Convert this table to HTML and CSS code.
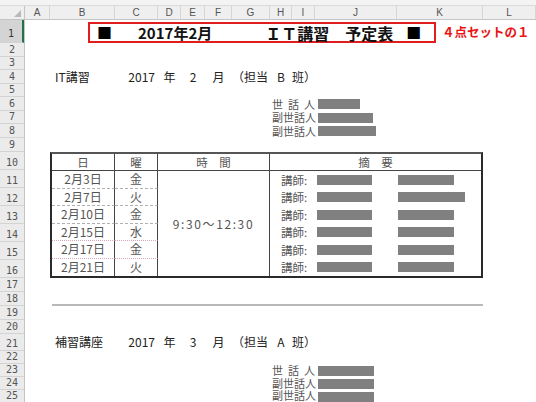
FILE: index.html
```html
<!DOCTYPE html>
<html lang="ja">
<head>
<meta charset="utf-8">
<title>IT講習 予定表</title>
<link rel="stylesheet" href="styles.css">
</head>
<body>
<div class="app">
  <div class="topstrip"></div>
  <div class="colhdr">
    <div class="corner"><span class="tri"></span></div>
    <div>A</div><div>B</div><div>C</div><div>D</div><div>E</div><div>F</div>
    <div>G</div><div>H</div><div>I</div><div>J</div><div>K</div><div>L</div>
  </div>
  <div class="main">
    <div class="rowhdr">
      <div class="sel">1</div><div>2</div><div>3</div><div>4</div><div>5</div>
      <div>6</div><div>7</div><div>8</div><div>9</div><div>10</div>
      <div>11</div><div>12</div><div>13</div><div>14</div><div>15</div>
      <div>16</div><div>17</div><div>18</div><div>19</div><div>20</div>
      <div>21</div><div>22</div><div>23</div><div>24</div><div>25</div>
    </div>
    <div class="sheet">
      <div class="title">
        <div class="redbox">
          <span class="sq">■</span>
          <span class="ym">2017年2月</span>
          <span class="ttl">ＩＴ講習　予定表</span>
          <span class="sq sq2">■</span>
        </div>
        <span class="note">４点セットの１</span>
      </div>

      <div class="cell l r4 cb pl5">IT講習</div>
      <div class="cell r r4 cc">2017</div>
      <div class="cell c r4 cd">年</div>
      <div class="cell c r4 ce">2</div>
      <div class="cell c r4 cf">月</div>
      <div class="cell l r4 cg">（担当</div>
      <div class="cell c r4 ch">B</div>
      <div class="cell l r4 ci">班）</div>

      <div class="cell l r6 lab"><span class="dist"><span>世</span><span>話</span><span>人</span></span></div>
      <div class="cell l r6 cj"><span class="red" style="width:42px"></span></div>
      <div class="cell l r7 lab"><span class="dist">副世話人</span></div>
      <div class="cell l r7 cj"><span class="red" style="width:55px"></span></div>
      <div class="cell l r8 lab"><span class="dist">副世話人</span></div>
      <div class="cell l r8 cj"><span class="red" style="width:58px"></span></div>

      <div class="tbl">
        <div class="th">日</div>
        <div class="th">曜</div>
        <div class="th">時　間</div>
        <div class="th last">摘　要</div>

        <div class="td">2月3日</div><div class="td">金</div>
        <div class="time">9:30～12:30</div>
        <div class="memo"><span>講師:</span><span class="red b1"></span><span class="red" style="width:56px"></span></div>

        <div class="td">2月7日</div><div class="td">火</div>
        <div class="memo"><span>講師:</span><span class="red b1"></span><span class="red" style="width:67px"></span></div>

        <div class="td">2月10日</div><div class="td">金</div>
        <div class="memo"><span>講師:</span><span class="red b1"></span><span class="red" style="width:56px"></span></div>

        <div class="td pink">2月15日</div><div class="td pink">水</div>
        <div class="memo"><span>講師:</span><span class="red b1"></span><span class="red" style="width:56px"></span></div>

        <div class="td pink">2月17日</div><div class="td pink">金</div>
        <div class="memo"><span>講師:</span><span class="red b1"></span><span class="red" style="width:56px"></span></div>

        <div class="td end">2月21日</div><div class="td end">火</div>
        <div class="memo"><span>講師:</span><span class="red b1"></span><span class="red" style="width:56px"></span></div>
      </div>

      <div class="sep"></div>

      <div class="cell l r21 cb pl5">補習講座</div>
      <div class="cell r r21 cc">2017</div>
      <div class="cell c r21 cd">年</div>
      <div class="cell c r21 ce">3</div>
      <div class="cell c r21 cf">月</div>
      <div class="cell l r21 cg">（担当</div>
      <div class="cell c r21 ch">A</div>
      <div class="cell l r21 ci">班）</div>

      <div class="cell l r23 lab"><span class="dist"><span>世</span><span>話</span><span>人</span></span></div>
      <div class="cell l r23 cj"><span class="red" style="width:56px"></span></div>
      <div class="cell l r24 lab"><span class="dist">副世話人</span></div>
      <div class="cell l r24 cj"><span class="red" style="width:56px"></span></div>
      <div class="cell l r25 lab"><span class="dist">副世話人</span></div>
      <div class="cell l r25 cj"><span class="red" style="width:56px"></span></div>
    </div>
  </div>
</div>
</body>
</html>
```
FILE: styles.css
```css
* { box-sizing: border-box; margin: 0; padding: 0; }
html, body { background: #fff; }
body {
  width: 536px;
  height: 402px;
  overflow: hidden;
  font-family: "Noto Sans CJK JP", "Noto Sans", sans-serif;
  color: #222;
}
.app { width: 536px; }

.topstrip {
  height: 6px;
  background: #f3f3f3;
  border-bottom: 1px solid #dadada;
}

.colhdr {
  display: grid;
  grid-template-columns: 25px 25px 65px 43px 23px 24px 27px 38px 22px 23px 82px 86px 53px;
  height: 14px;
  background: #efefef;
  border-bottom: 1px solid #c4c4c4;
}
.colhdr > div {
  border-right: 1px solid #d6d6d6;
  font: 10px "Liberation Sans", Arial, sans-serif;
  color: #555;
  display: flex;
  align-items: center;
  justify-content: center;
}
.colhdr > .corner {
  justify-content: flex-end;
  align-items: flex-end;
  padding: 0 3px 2px 0;
  border-right: 1px solid #c4c4c4;
}
.tri {
  width: 0;
  height: 0;
  border-left: 7px solid transparent;
  border-bottom: 7px solid #b9b9b9;
}

.main { display: flex; }

.rowhdr, .sheet {
  grid-template-rows: 23px 14px 13px 14px 13px 14px 13px 14px 14px 18px 18px 18px 18px 18px 18px 18px 14px 14px 14px 14px 17px 13px 13px 13px 13px;
}
.rowhdr {
  width: 25px;
  display: grid;
  background: #ebebeb;
  border-right: 1px solid #c6c6c6;
}
.rowhdr > div {
  border-bottom: 1px solid #d3d3d3;
  font: 10px "DejaVu Sans Mono", monospace;
  color: #555;
  display: flex;
  align-items: flex-end;
  justify-content: center;
  line-height: 10px;
  padding-bottom: 1px;
}
.rowhdr > .sel {
  background: #d4d4d4;
  border-right: 2px solid #217346;
  color: #333;
  padding-bottom: 3px;
}

.sheet {
  display: grid;
  grid-template-columns: 25px 65px 43px 23px 24px 27px 38px 22px 23px 82px 86px 53px;
  width: 511px;
}

/* title row */
.title {
  grid-row: 1;
  grid-column: 1 / -1;
  display: flex;
  align-items: center;
  padding: 2px 0 0 63px;
}
.redbox {
  width: 348px;
  height: 21px;
  border: 2px solid #e21d1d;
  display: flex;
  align-items: center;
  font-weight: 700;
  color: #111;
  line-height: 1;
  white-space: nowrap;
}
.sq { font-size: 15px; margin-left: 7px; color: #000; font-weight: 400; }
.ym { font-size: 15px; margin-left: 26px; }
.ttl { font-size: 16px; margin-left: 53px; }
.sq2 { margin-left: 13px; }
.note {
  margin-left: 6px;
  font-size: 12.5px;
  font-weight: 700;
  color: #e81515;
  white-space: nowrap;
  line-height: 1;
}

/* generic cells */
.cell {
  display: flex;
  align-items: flex-end;
  white-space: nowrap;
  font-size: 12px;
  line-height: 12px;
  padding-bottom: 1px;
}
.cell.l { justify-content: flex-start; }
.cell.c { justify-content: center; }
.cell.r { justify-content: flex-end; padding-right: 3px; }
.pl5 { padding-left: 5px; }

.r4 { grid-row: 4; }
.r6 { grid-row: 6; }
.r7 { grid-row: 7; }
.r8 { grid-row: 8; }
.r21 { grid-row: 21; align-items: center; }
.r23 { grid-row: 23; }
.r24 { grid-row: 24; }
.r25 { grid-row: 25; padding-bottom: 2px; }

.cb { grid-column: 2; }
.cc { grid-column: 3; }
.cd { grid-column: 4; }
.ce { grid-column: 5; }
.cf { grid-column: 6; }
.cg { grid-column: 7; }
.ch { grid-column: 8; }
.ci { grid-column: 9; overflow: visible; }
.cj { grid-column: 10; padding-left: 3px; align-items: center; padding-bottom: 0; }

.lab {
  grid-column: 8 / span 2;
  padding-left: 2px;
  color: #555;
  font-size: 11px;
  line-height: 11px;
}
.dist {
  display: inline-flex;
  justify-content: space-between;
  width: 44px;
}

.red {
  display: inline-block;
  height: 10px;
  background: #808080;
}

/* schedule table */
.tbl {
  grid-row: 10 / 17;
  grid-column: 2 / 12;
  border: 2px solid #2a2a2a;
  border-top-color: #555;
  display: grid;
  grid-template-columns: 63px 43px 112px 211px;
  grid-template-rows: 17px repeat(6, 17.5px);
  font-size: 12px;
  color: #555;
}
.tbl > div {
  display: flex;
  align-items: center;
  justify-content: center;
  line-height: 12px;
  white-space: nowrap;
}
.th {
  border-bottom: 1px solid #444;
  border-right: 1px solid #444;
  font-size: 11.5px;
}
.th.last { border-right: 0; }
.td {
  border-right: 1px solid #444;
  border-bottom: 1px dashed #b0b0b0;
}
.td.pink { border-bottom: 1px dotted #d8a8b8; }
.td.end { border-bottom: 0; }
.time {
  grid-column: 3;
  grid-row: 2 / 8;
  border-right: 1px solid #444;
  letter-spacing: 1.6px;
}
.tbl > .memo {
  grid-column: 4;
  justify-content: flex-start;
  padding-left: 11px;
}
.memo > span:first-child { width: 36px; font-size: 11.5px; }
.memo .b1 { width: 55px; margin-right: 26px; }

.sep {
  grid-row: 18;
  grid-column: 2 / 12;
  border-bottom: 2px solid #b9b9b9;
  margin-left: 2px;
}
```
